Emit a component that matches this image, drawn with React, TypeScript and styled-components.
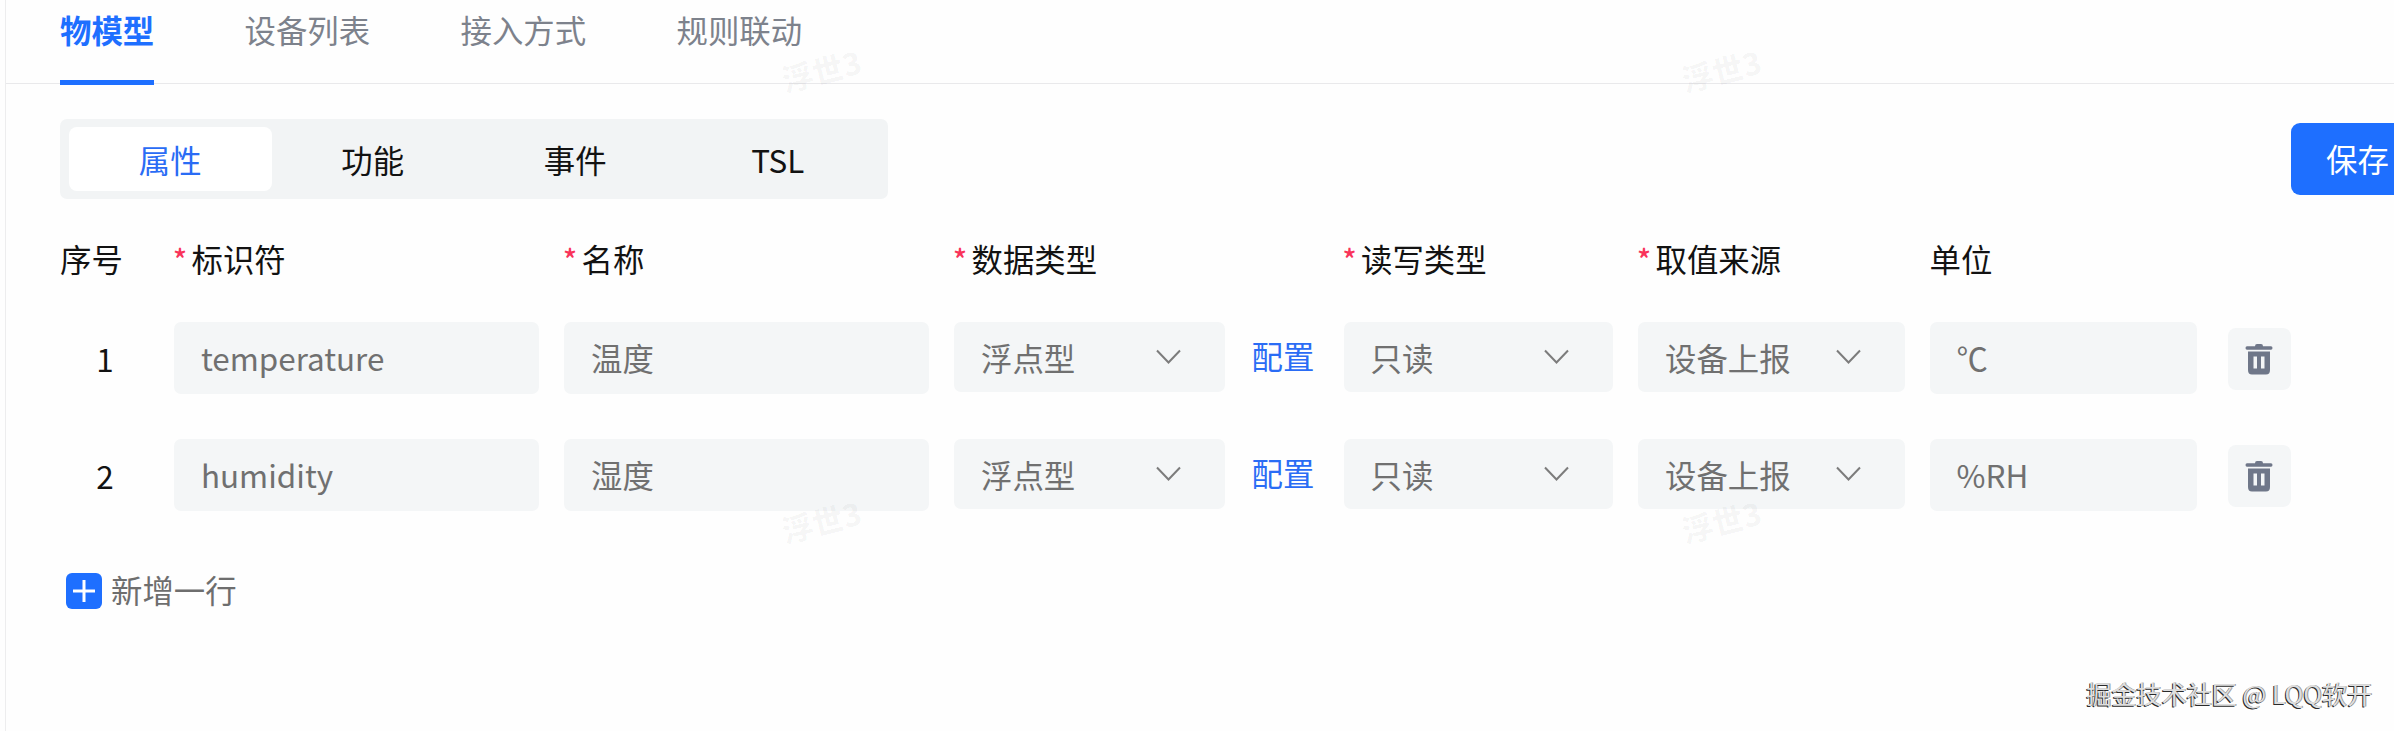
import React from 'react';
import styled, { createGlobalStyle } from 'styled-components';

const Global = createGlobalStyle`
  * { box-sizing: border-box; }
  html, body { margin: 0; padding: 0; overflow: hidden; background: #fefefe; }
  body { font-family: "Noto Sans CJK SC", sans-serif; font-size: 31.4px; color: #121212; }
  button, input { font: inherit; color: inherit; border: 0; margin: 0; padding: 0; }
`;

const Page = styled.div`
  position: relative;
  width: 2394px;
  height: 731px;
  overflow: hidden;
  padding-left: 5px;
`;

const Panel = styled.main`
  height: 100%;
  border-left: 1px solid #ededee;
`;

const Tabs = styled.nav`
  display: flex;
  gap: 90.4px;
  height: 84px;
  padding-left: 54px;
  border-bottom: 1px solid #e9e9eb;
`;

const Tab = styled.a<{ $active?: boolean }>`
  height: 84.5px;
  line-height: 60px;
  white-space: nowrap;
  color: ${(p) => (p.$active ? '#1e6fff' : '#7d828c')};
  font-weight: ${(p) => (p.$active ? 700 : 400)};
  border-bottom: ${(p) => (p.$active ? '5px solid #1e6fff' : '0')};
`;

const Toolbar = styled.div`
  display: flex;
  justify-content: space-between;
  align-items: flex-start;
  padding: 35px 0 0 54px;
`;

const Segmented = styled.div`
  display: flex;
  width: 828px;
  height: 80px;
  padding: 8px 9px;
  border-radius: 7px;
  background: #f2f4f5;
`;

const Segment = styled.button<{ $active?: boolean }>`
  flex: 1;
  border-radius: 8px;
  padding-top: 1px;
  line-height: 63px;
  background: ${(p) => (p.$active ? '#fff' : 'transparent')};
  color: ${(p) => (p.$active ? '#2a6cf5' : '#121212')};
`;

const SaveButton = styled.button`
  flex: none;
  width: 140px;
  height: 72px;
  margin: 4px -37px 0 0;
  padding-left: 35px;
  border-radius: 9px;
  background: #1e6fff;
  color: #fff;
  text-align: left;
  line-height: 70px;
`;

const Line = styled.div`
  display: grid;
  grid-template-columns: 89px 365px 365px 364.5px 269.5px 266.6px 267px 63px;
  column-gap: 25px;
  margin-left: 54px;
`;

const HeaderLine = styled(Line)`
  height: 123px;
  line-height: 120px;
`;

const DataLine = styled(Line)`
  height: 117px;
`;

const HeaderCell = styled.div`
  display: flex;
  white-space: nowrap;
`;

const Star = styled.span`
  width: 17.5px;
  margin-left: -1px;
  margin-right: 1px;
  color: #f9335a;
  font-size: 29px;
  font-weight: 500;
  line-height: 118px;
`;

const Index = styled.div`
  line-height: 74px;
  padding-left: 1px;
  text-align: center;
`;

const Field = styled.input`
  width: 100%;
  height: 72px;
  padding: 0 27px 1px;
  border-radius: 7px;
  background: #f4f6f7;
  color: #707070;
  outline: 0;
`;

const SelectBox = styled.div`
  display: flex;
  flex: 1;
  align-items: center;
  justify-content: space-between;
  height: 70px;
  padding: 0 44px 0 27px;
  border-radius: 7px;
  background: #f4f6f7;
  color: #707070;
  white-space: nowrap;
`;

const TypeCell = styled.div`
  display: flex;
  gap: 27px;
`;

const ConfigLink = styled.a`
  width: 67px;
  line-height: 68px;
  white-space: nowrap;
  color: #2a6cf5;
`;

const DeleteButton = styled.button`
  display: flex;
  align-items: center;
  justify-content: center;
  width: 63px;
  height: 62px;
  margin: 6px 0 0 6px;
  border-radius: 8px;
  background: #f4f6f7;
`;

const AddRow = styled.button`
  display: flex;
  align-items: center;
  gap: 9px;
  height: 60px;
  margin: 5px 0 0 60px;
  background: transparent;
  color: #6e6e6e;
`;

const AddLabel = styled.span`
  padding-bottom: 3px;
`;

const Stamp = styled.span<{ $x: number; $y: number }>`
  position: absolute;
  left: ${(p) => p.$x}px;
  top: ${(p) => p.$y}px;
  font-size: 31px;
  line-height: 40px;
  font-weight: 900;
  color: rgba(0, 0, 0, 0.032);
  transform: rotate(-14deg);
  pointer-events: none;
`;

const Credit = styled.div`
  position: absolute;
  right: 22px;
  bottom: 19px;
  font-size: 25.1px;
  line-height: 38px;
  white-space: nowrap;
  color: #dedede;
  text-shadow: -1px 1px 0 #2a2a2a, 1px 0 0 #999;
`;

const Chevron = () => (
  <svg width="25" height="16" viewBox="0 0 25 16" fill="none" stroke="#7c7c7c" strokeWidth="2">
    <path d="M1 1.5 12.5 13.5 24 1.5" />
  </svg>
);

const Trash = () => (
  <svg width="28" height="31" viewBox="0 0 28 31" fill="#6f7789">
    <path d="M10 2.2Q10 0 12 0H16Q18 0 18 2.2H26Q27.5 2.2 27.5 4T26 5.8H2Q.5 5.8 .5 4T2 2.2Z" />
    <path fillRule="evenodd" d="M3 7.500H25V26Q25 30.5 21 30.5H7Q3 30.5 3 26ZM8.5 12.500V24.500H12V12.500ZM16 12.500V24.500H19.500V12.500Z" />
  </svg>
);

const Plus = () => (
  <svg width="36" height="36" viewBox="0 0 36 36">
    <rect width="36" height="36" rx="6" fill="#1e6fff" />
    <path d="M18 7V29M7 18H29" stroke="#fff" strokeWidth="3" />
  </svg>
);

const headers = [
  { text: '序号' },
  { text: '标识符', required: true },
  { text: '名称', required: true },
  { text: '数据类型', required: true },
  { text: '读写类型', required: true },
  { text: '取值来源', required: true },
  { text: '单位' },
];

const rows = [
  { id: 'temperature', name: '温度', unit: '℃' },
  { id: 'humidity', name: '湿度', unit: '%RH' },
];

const stamps = [
  [781, 50],
  [1681, 50],
  [781, 501],
  [1681, 501],
];

export default function App() {
  return (
    <Page>
      <Global />
      <Panel>
        <Tabs>
          <Tab $active>物模型</Tab>
          <Tab>设备列表</Tab>
          <Tab>接入方式</Tab>
          <Tab>规则联动</Tab>
        </Tabs>
        <Toolbar>
          <Segmented>
            <Segment $active>属性</Segment>
            <Segment>功能</Segment>
            <Segment>事件</Segment>
            <Segment>TSL</Segment>
          </Segmented>
          <SaveButton>保存</SaveButton>
        </Toolbar>
        <HeaderLine>
          {headers.map((h) => (
            <HeaderCell key={h.text}>
              {h.required && <Star>*</Star>}
              {h.text}
            </HeaderCell>
          ))}
        </HeaderLine>
        {rows.map((row, i) => (
          <DataLine key={row.id}>
            <Index>{i + 1}</Index>
            <Field defaultValue={row.id} />
            <Field defaultValue={row.name} />
            <TypeCell>
              <SelectBox>浮点型<Chevron /></SelectBox>
              <ConfigLink>配置</ConfigLink>
            </TypeCell>
            <SelectBox>只读<Chevron /></SelectBox>
            <SelectBox>设备上报<Chevron /></SelectBox>
            <Field defaultValue={row.unit} />
            <DeleteButton aria-label="删除"><Trash /></DeleteButton>
          </DataLine>
        ))}
        <AddRow>
          <Plus />
          <AddLabel>新增一行</AddLabel>
        </AddRow>
      </Panel>
      {stamps.map(([x, y]) => (
        <Stamp key={`${x}-${y}`} $x={x} $y={y}>浮世3</Stamp>
      ))}
      <Credit>掘金技术社区 @ LQQ软开</Credit>
    </Page>
  );
}
